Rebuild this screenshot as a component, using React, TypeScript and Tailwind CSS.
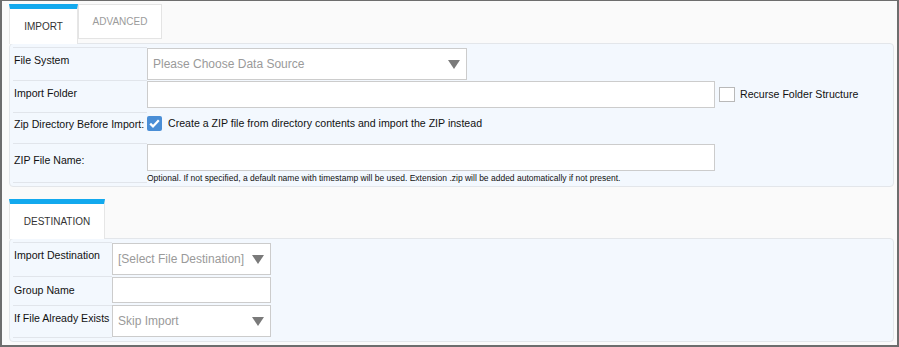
const FONT = "font-['Liberation_Sans',Arial,sans-serif]";

function Caret() {
  return (
    <svg width="12" height="9" viewBox="0 0 12 9" className="shrink-0">
      <path d="M0 0h12L6 9z" fill="#7a7a7a" />
    </svg>
  );
}

type SelectProps = { text: string; className: string };

function FakeSelect({ text, className }: SelectProps) {
  return (
    <div
      className={`flex items-center justify-between border border-[#cccccc] bg-white pl-[5px] pr-[6px] text-[12px] text-[#9a9a9a] ${className}`}
    >
      <span className="whitespace-nowrap">{text}</span>
      <Caret />
    </div>
  );
}

function CheckedBox() {
  return (
    <svg width="15" height="15" viewBox="0 0 15 15" className="shrink-0">
      <rect x="0" y="0" width="15" height="15" rx="2" fill="#4a8ed6" />
      <path d="M3.2 7.6l2.8 2.8 5.8-6.2" fill="none" stroke="#fff" strokeWidth="2.2" />
    </svg>
  );
}

type RowProps = {
  label: string;
  labelWidth: string;
  padTop: string;
  height: string;
  last?: boolean;
  children: React.ReactNode;
};

function Row({ label, labelWidth, padTop, height, last, children }: RowProps) {
  return (
    <div className={`flex ${height}`}>
      <div
        className={`${labelWidth} shrink-0 border-t border-[#e1e5eb] ${last ? "border-b" : ""} ${padTop} whitespace-nowrap pl-px text-[10.6px] leading-[13px] text-[#111]`}
      >
        {label}
      </div>
      <div className="flex-1">{children}</div>
    </div>
  );
}

export default function App() {
  return (
    <div
      className={`${FONT} h-[347px] w-[899px] border-x-2 border-t border-b-2 border-[#6d6d6d] bg-[#fafafa] pl-[7px] pr-[3px] pt-[3px]`}
    >
      {/* import / advanced */}
      <div className="flex items-start">
        <div className="relative z-10 -mb-px flex h-[40px] w-[69px] items-center justify-center border-x border-t-[5px] border-x-[#e6e6e6] border-t-[#12a9ee] bg-white text-[10px] text-[#333]">
          IMPORT
        </div>
        <div className="flex h-[35px] w-[84px] items-center justify-center border border-[#e4e4e4] bg-white text-[10px] text-[#9b9b9b]">
          ADVANCED
        </div>
      </div>
      <div className="rounded-[4px] border border-[#e3e6ea] bg-[#f3f8fe] px-[3px] pb-[3px] pt-[3px]">
        <Row label="File System" labelWidth="w-[134px]" padTop="pt-[6px]" height="h-[33px]">
          <FakeSelect text="Please Choose Data Source" className="mt-px h-[32px] w-[320px]" />
        </Row>
        <Row label="Import Folder" labelWidth="w-[134px]" padTop="pt-[6px]" height="h-[32px]">
          <div className="mt-[1px] flex items-center">
            <div className="h-[27px] w-[568px] border border-[#cccccc] bg-white" />
            <div className="ml-[4px] h-[15px] w-[16px] border border-[#b9b9b9] bg-white" />
            <span className="ml-[5px] text-[10.6px] text-[#111]">Recurse Folder Structure</span>
          </div>
        </Row>
        <Row label="Zip Directory Before Import:" labelWidth="w-[134px]" padTop="pt-[5px]" height="h-[31px]">
          <div className="mt-[4px] flex items-center">
            <CheckedBox />
            <span className="ml-[6px] text-[10.6px] text-[#111]">
              Create a ZIP file from directory contents and import the ZIP instead
            </span>
          </div>
        </Row>
        <Row label="ZIP File Name:" labelWidth="w-[134px]" padTop="pt-[10px]" height="h-[40px]" last>
          <div className="mt-[1px] h-[27px] w-[568px] border border-[#cccccc] bg-white" />
          <div className="mt-[2px] whitespace-nowrap text-[8.5px] leading-[10px] text-[#111]">
            Optional. If not specified, a default name with timestamp will be used. Extension .zip will be added
            automatically if not present.
          </div>
        </Row>
      </div>

      {/* destination */}
      <div className="mt-[12px] flex">
        <div className="relative z-10 -mb-px flex h-[40px] w-[96px] items-center justify-center border-x border-t-[5px] border-x-[#e6e6e6] border-t-[#12a9ee] bg-white text-[10px] text-[#333]">
          DESTINATION
        </div>
      </div>
      <div className="rounded-[4px] border border-[#e3e6ea] bg-[#f3f8fe] px-[3px] pb-[3px] pt-[3px]">
        <Row label="Import Destination" labelWidth="w-[99px]" padTop="pt-[6px]" height="h-[34px]">
          <FakeSelect text="[Select File Destination]" className="mt-[1px] h-[32px] w-[159px]" />
        </Row>
        <Row label="Group Name" labelWidth="w-[99px]" padTop="pt-[7px]" height="h-[29px]">
          <div className="mt-[1px] h-[26px] w-[159px] border border-[#cccccc] bg-white" />
        </Row>
        <Row label="If File Already Exists" labelWidth="w-[99px]" padTop="pt-[6px]" height="h-[33px]" last>
          <FakeSelect text="Skip Import" className="h-[32px] w-[159px]" />
        </Row>
      </div>
    </div>
  );
}
